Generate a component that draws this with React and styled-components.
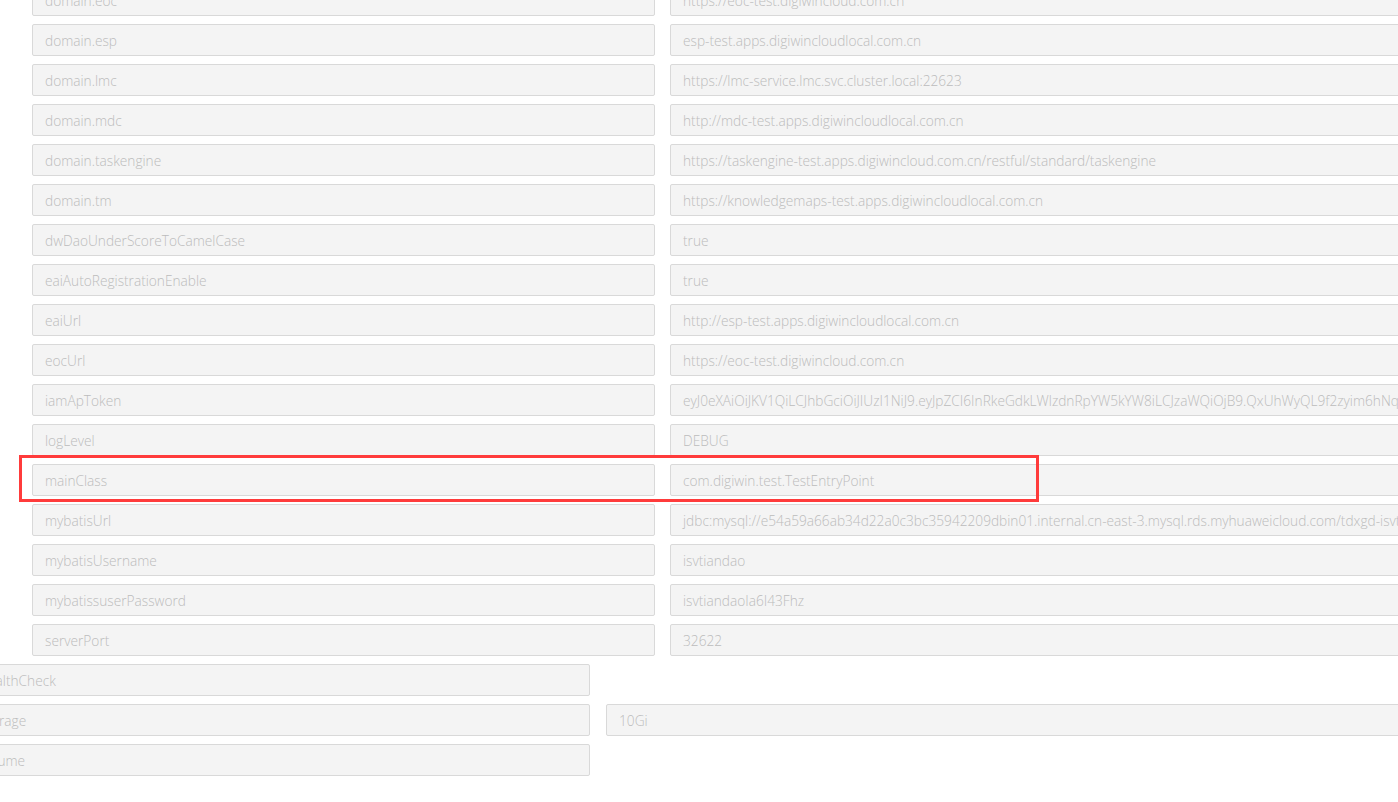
import styled, { createGlobalStyle } from "styled-components"

const Global = createGlobalStyle`
  html, body {
    margin: 0;
    padding: 0;
    background: #fff;
    overflow: hidden;
  }
  body {
    font-family: "Open Sans", "Noto Sans", sans-serif;
  }
`

const Page = styled.div`
  width: 1398px;
  height: 802px;
  overflow: hidden;
`

const List = styled.div`
  display: flex;
  flex-direction: column;
  gap: 8px;
  margin-top: -16px;
`

const Row = styled.div`
  position: relative;
  display: flex;
  gap: ${props => props.outer ? "16px" : "15px"};
  margin-left: ${props => props.outer ? "-33px" : "32px"};
`

const Field = styled.div`
  box-sizing: border-box;
  flex: none;
  width: ${props => props.w}px;
  height: 32px;
  padding: 1px 12px 0;
  background: #f4f4f4;
  border: 1px solid #d9d9d9;
  border-radius: 2px;
  color: #bcbcbc;
  font-size: 13.7px;
  font-weight: 300;
  line-height: 29px;
  white-space: nowrap;
  overflow: hidden;
`

const Highlight = styled.div`
  position: absolute;
  left: -13px;
  top: -9px;
  width: 1020px;
  height: 47px;
  box-sizing: border-box;
  border: 3px solid #ff3b3b;
  pointer-events: none;
`

const envRows = [
  ["domain.eoc", "https://eoc-test.digiwincloud.com.cn"],
  ["domain.esp", "esp-test.apps.digiwincloudlocal.com.cn"],
  ["domain.lmc", "https://lmc-service.lmc.svc.cluster.local:22623"],
  ["domain.mdc", "http://mdc-test.apps.digiwincloudlocal.com.cn"],
  ["domain.taskengine", "https://taskengine-test.apps.digiwincloud.com.cn/restful/standard/taskengine"],
  ["domain.tm", "https://knowledgemaps-test.apps.digiwincloudlocal.com.cn"],
  ["dwDaoUnderScoreToCamelCase", "true"],
  ["eaiAutoRegistrationEnable", "true"],
  ["eaiUrl", "http://esp-test.apps.digiwincloudlocal.com.cn"],
  ["eocUrl", "https://eoc-test.digiwincloud.com.cn"],
  ["iamApToken", "eyJ0eXAiOiJKV1QiLCJhbGciOiJIUzI1NiJ9.eyJpZCI6InRkeGdkLWlzdnRpYW5kYW8iLCJzaWQiOjB9.QxUhWyQL9f2zyim6hNqPk"],
  ["logLevel", "DEBUG"],
  ["mainClass", "com.digiwin.test.TestEntryPoint", true],
  ["mybatisUrl", "jdbc:mysql://e54a59a66ab34d22a0c3bc35942209dbin01.internal.cn-east-3.mysql.rds.myhuaweicloud.com/tdxgd-isvtiandao"],
  ["mybatisUsername", "isvtiandao"],
  ["mybatissuserPassword", "isvtiandaoIa6I43Fhz"],
  ["serverPort", "32622"],
]

const outerRows = [
  ["healthCheck", null],
  ["storage", "10Gi"],
  ["volume", null],
]

export default function App() {
  return (
    <Page>
      <Global />
      <List>
        {envRows.map(([key, value, marked]) => (
          <Row key={key}>
            <Field w={623}>{key}</Field>
            <Field w={800}>{value}</Field>
            {marked && <Highlight />}
          </Row>
        ))}
        {outerRows.map(([key, value]) => (
          <Row outer key={key}>
            <Field w={623}>{key}</Field>
            {value && <Field w={800}>{value}</Field>}
          </Row>
        ))}
      </List>
    </Page>
  )
}
